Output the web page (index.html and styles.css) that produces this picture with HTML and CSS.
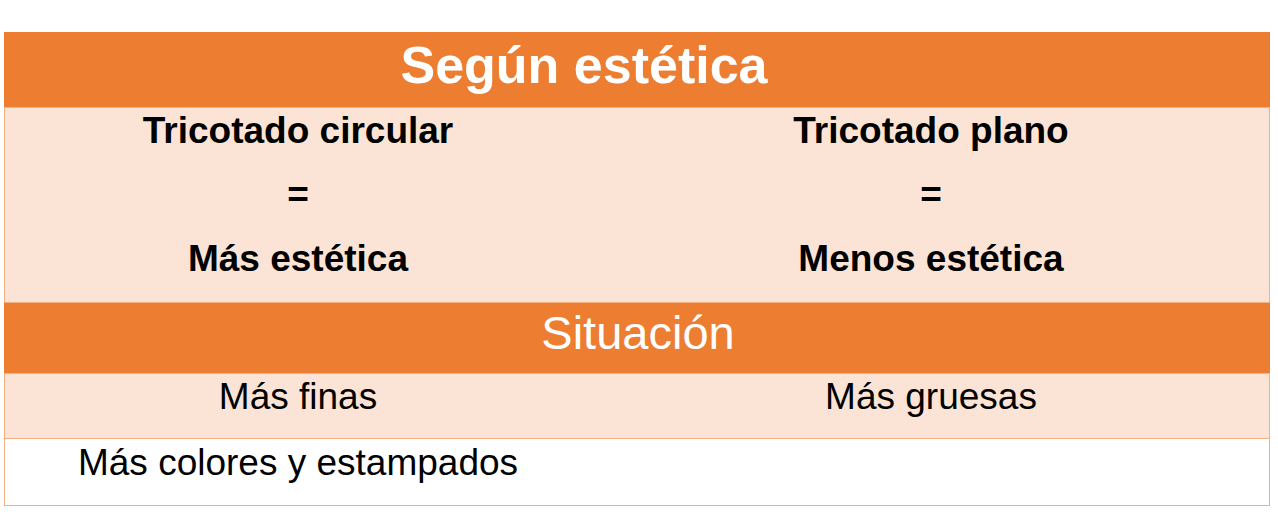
FILE: index.html
```html
<!DOCTYPE html>
<html lang="es">
<head>
<meta charset="utf-8">
<title>Según estética</title>
<link rel="stylesheet" href="styles.css">
</head>
<body>
<div class="table">
  <div class="row head">
    <div class="cell span">Según estética</div>
  </div>
  <div class="row peach tall">
    <div class="cell bold stack">
      <div>Tricotado circular</div>
      <div>=</div>
      <div>Más estética</div>
    </div>
    <div class="cell bold stack">
      <div>Tricotado plano</div>
      <div>=</div>
      <div>Menos estética</div>
    </div>
  </div>
  <div class="row sub">
    <div class="cell span">Situación</div>
  </div>
  <div class="row peach r4">
    <div class="cell">Más finas</div>
    <div class="cell">Más gruesas</div>
  </div>
  <div class="row white r5">
    <div class="cell">Más colores y estampados</div>
    <div class="cell"></div>
  </div>
</div>
</body>
</html>
```
FILE: styles.css
```css
html, body {
  margin: 0;
  padding: 0;
  background: #ffffff;
}
body {
  font-family: "Liberation Sans", Arial, sans-serif;
  color: #000000;
}
.table {
  margin: 32px 0 0 4px;
  width: 1266px;
  box-sizing: border-box;
}
.row {
  display: grid;
  grid-template-columns: 586px 680px;
  box-sizing: border-box;
  border-left: 1px solid #f4b183;
  border-right: 1px solid #f4b183;
}
.cell {
  text-align: center;
  font-size: 37px;
  line-height: 42px;
}
.cell.span {
  grid-column: 1 / 3;
}
.head {
  background: #ed7d31;
  height: 75px;
  border-left-color: #ed7d31;
  border-right-color: #ed7d31;
}
.head .cell {
  color: #ffffff;
  font-weight: bold;
  font-size: 52px;
  line-height: 60px;
  padding: 3px 108px 0 0;
}
.peach {
  background: #fbe4d5;
}
.white {
  background: #ffffff;
}
.tall {
  height: 195px;
  border-top: 1px solid #f4b183;
}
.stack {
  display: flex;
  flex-direction: column;
  gap: 22px;
  padding-top: 2px;
}
.bold {
  font-weight: bold;
}
.sub {
  background: #ed7d31;
  height: 71px;
  border-top: 1px solid #f4b183;
  border-left-color: #ed7d31;
  border-right-color: #ed7d31;
}
.sub .cell {
  color: #ffffff;
  font-size: 47px;
  line-height: 54px;
  padding-top: 3px;
}
.r4 {
  height: 65px;
  border-top: 1px solid #f4b183;
}
.r4 .cell {
  padding-top: 2px;
}
.r5 {
  height: 68px;
  border-top: 1px solid #f4b183;
  border-bottom: 1px solid #f4b183;
}
.r5 .cell {
  padding-top: 3px;
}
```
